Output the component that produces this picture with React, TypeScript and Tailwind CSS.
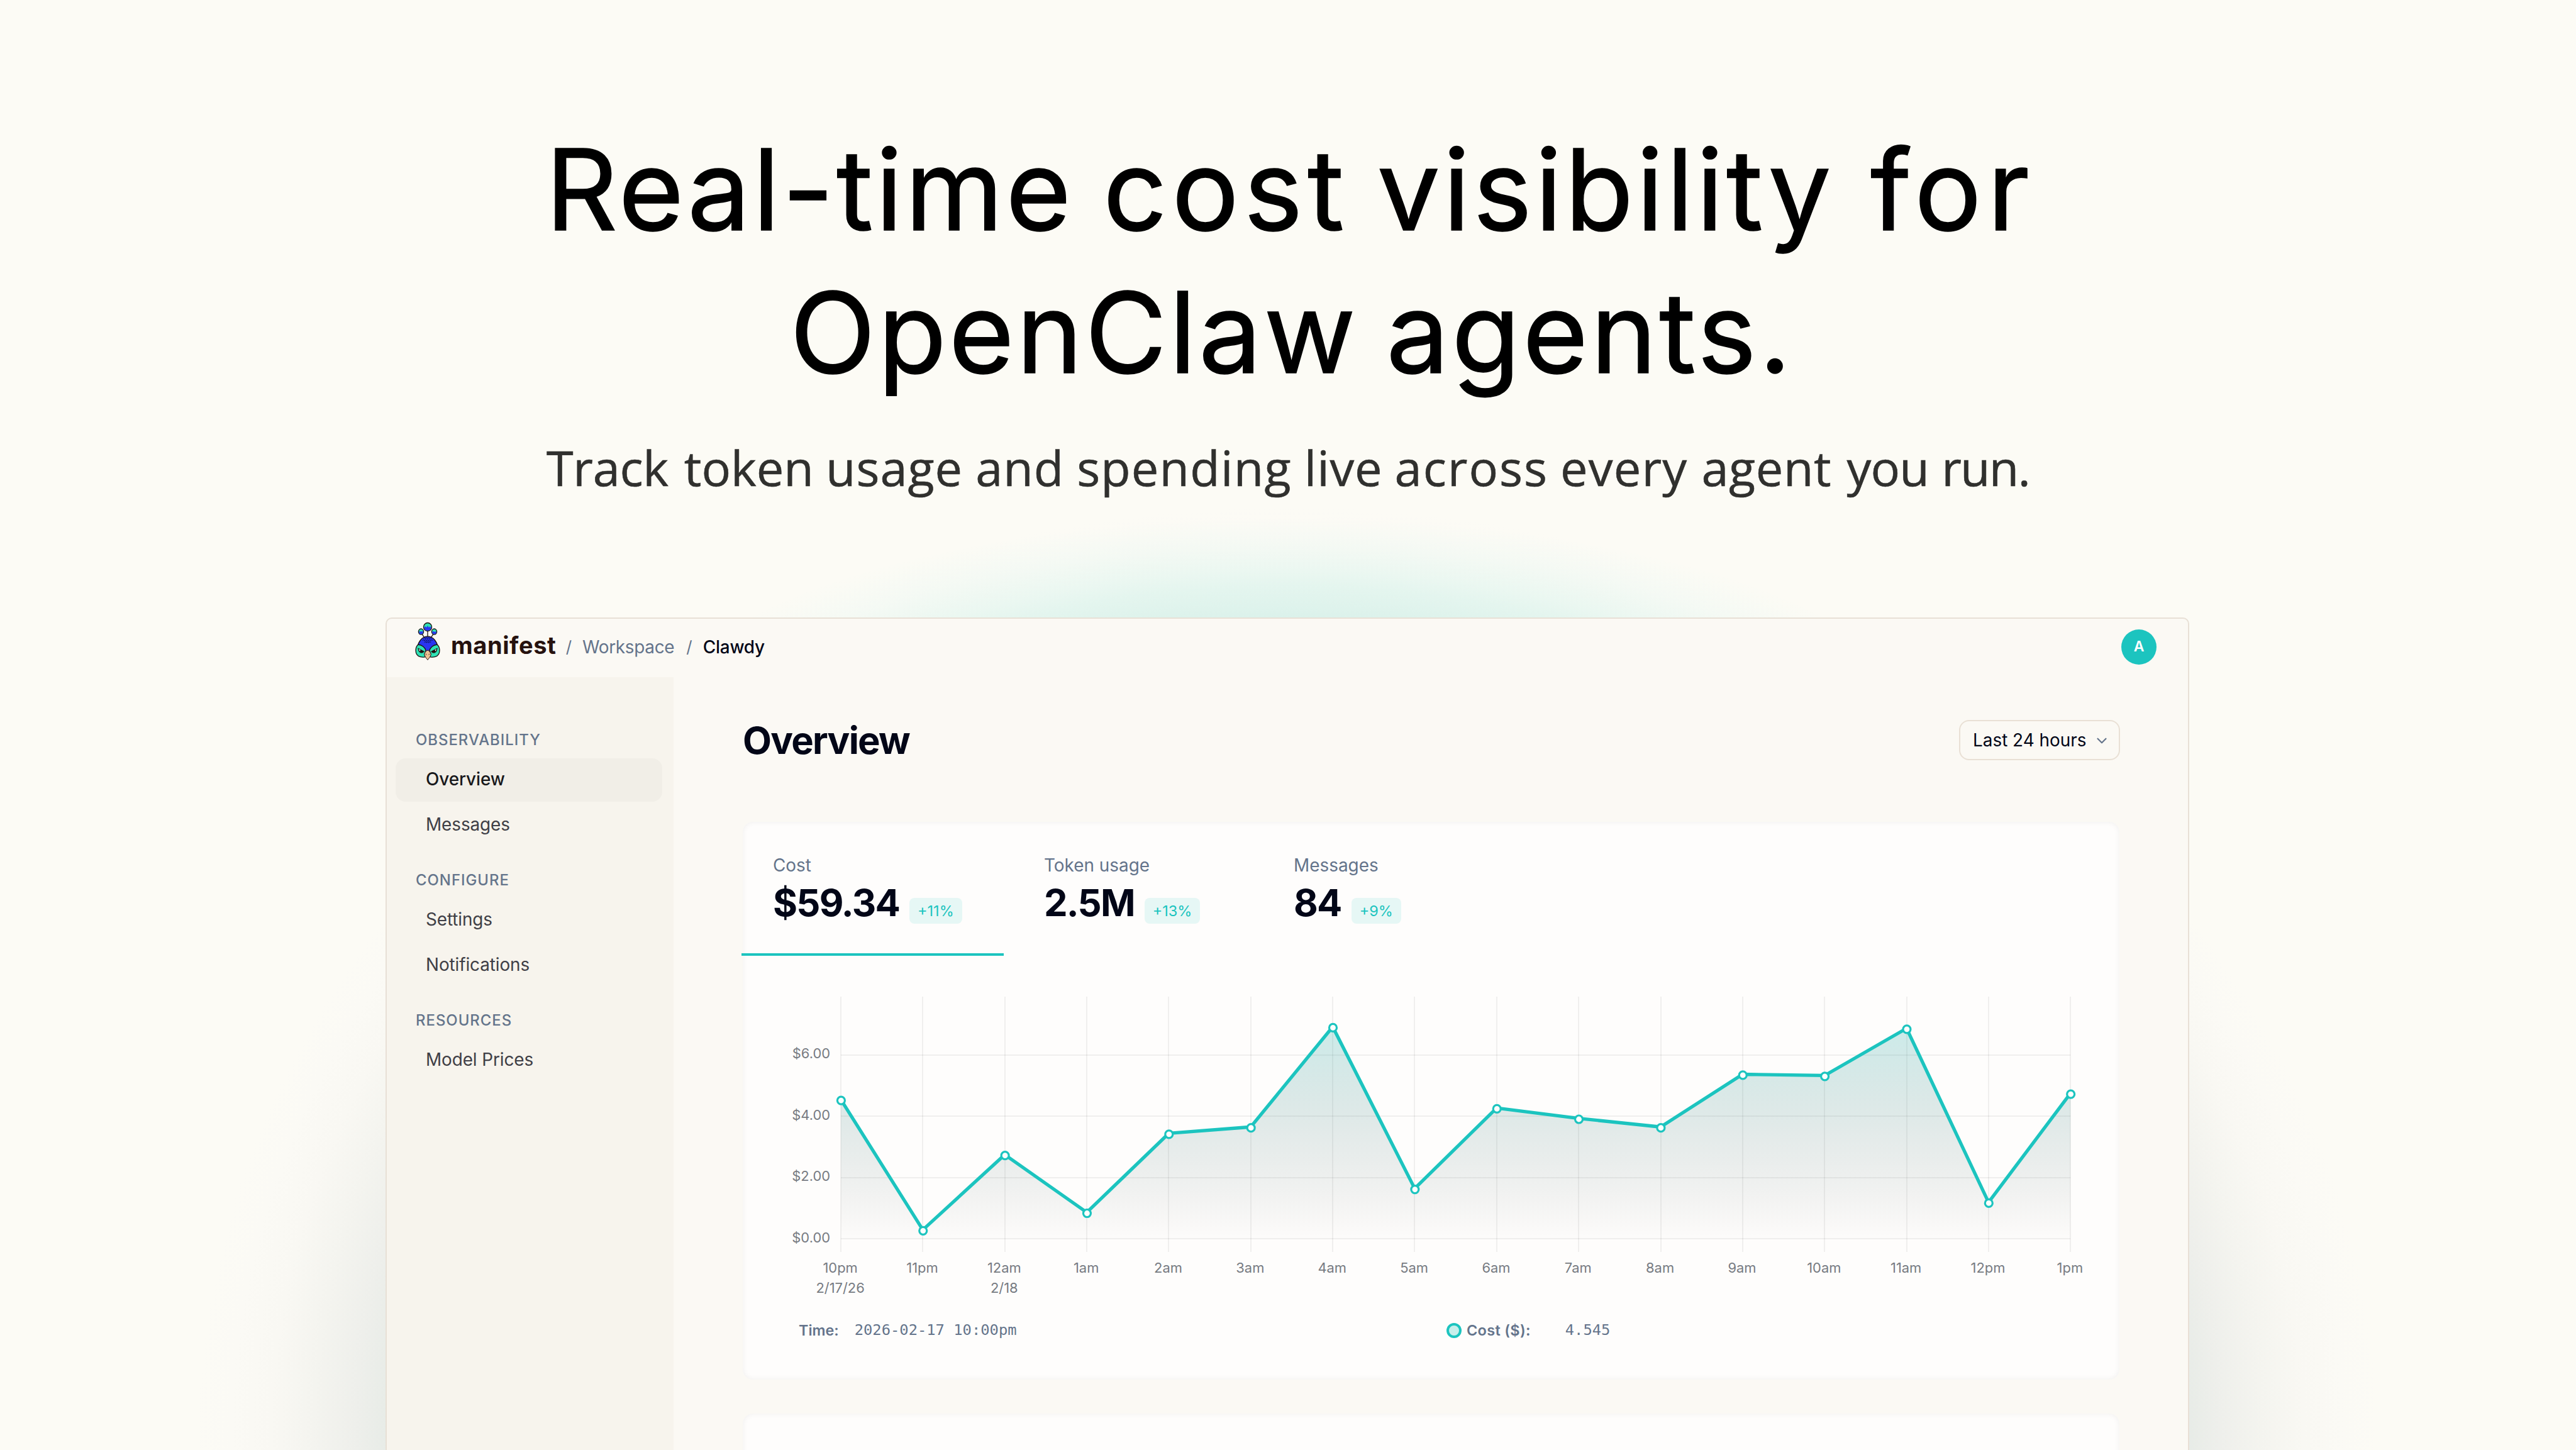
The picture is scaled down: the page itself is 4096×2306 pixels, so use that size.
import { ChevronDown } from 'lucide-react';
import { clsx } from 'clsx';

type Word = { text: string; className: string };

const headline: Word[][] = [
  [
    { text: 'Real-time', className: 'tracking-[4px]' },
    { text: 'cost', className: 'pl-[3px] tracking-[7.5px]' },
    { text: 'visibility', className: 'pl-[1px] tracking-[4.6px]' },
    { text: 'for', className: 'pl-[14px] tracking-[9.3px]' }
  ],
  [
    { text: 'OpenClaw', className: 'tracking-[3.8px]' },
    { text: 'agents.', className: 'pl-[1px] tracking-[4px]' }
  ]
];

const tagline: Word[] = [
  { text: 'Track', className: 'tracking-[-0.3px]' },
  { text: 'token', className: 'pl-[5px] tracking-normal' },
  { text: 'usage', className: '-ml-[1px] tracking-[1px]' },
  { text: 'and', className: 'tracking-[0.9px]' },
  { text: 'spending', className: 'tracking-[1.2px]' },
  { text: 'live', className: 'tracking-[0.8px]' },
  { text: 'across', className: '-ml-[1px] tracking-[2px]' },
  { text: 'every', className: '-ml-[1px] tracking-[1.2px]' },
  { text: 'agent', className: 'pl-[2px] tracking-[0.6px]' },
  { text: 'you', className: 'pl-[4px] tracking-[-0.8px]' },
  { text: 'run.', className: 'tracking-[-1.8px]' }
];

const navSections = [
  { title: 'Observability', items: ['Overview', 'Messages'] },
  { title: 'Configure', items: ['Settings', 'Notifications'] },
  { title: 'Resources', items: ['Model Prices'] }
];

const stats = [
  { label: 'Cost', value: '$59.34', trend: '+11%', className: '-ml-[3px] w-[417px] pl-[50px]' },
  { label: 'Token usage', value: '2.5M', trend: '+13%', className: 'w-[397px] pl-[64px]' },
  { label: 'Messages', value: '84', trend: '+9%', className: 'pl-[64px]' }
];

const series = [
  { hour: '10pm', date: '2/17/26', cost: 4.545 },
  { hour: '11pm', cost: 0.29 },
  { hour: '12am', date: '2/18', cost: 2.745 },
  { hour: '1am', cost: 0.86 },
  { hour: '2am', cost: 3.44 },
  { hour: '3am', cost: 3.65 },
  { hour: '4am', cost: 6.92 },
  { hour: '5am', cost: 1.64 },
  { hour: '6am', cost: 4.27 },
  { hour: '7am', cost: 3.93 },
  { hour: '8am', cost: 3.65 },
  { hour: '9am', cost: 5.37 },
  { hour: '10am', cost: 5.33 },
  { hour: '11am', cost: 6.87 },
  { hour: '12pm', cost: 1.19 },
  { hour: '1pm', cost: 4.75 }
];

function Words({ words }: { words: Word[] }) {
  return (
    <>
      {words.map((word, i) => (
        <span key={word.text}>
          {i > 0 && ' '}
          <span className={word.className}>{word.text}</span>
        </span>
      ))}
    </>
  );
}

function PeacockLogo() {
  return (
    <svg viewBox="22 22 122 186" className="h-[62px] w-[40px]" stroke="#1d1210" strokeWidth="4">
      <path d="M83 62V96M56 80L68 98M110 80L98 98" fill="none" />
      {/* crest */}
      <circle cx="83" cy="45" r="20" fill="#2ee2b4" />
      <path d="M66 47l5-5 6 6 6-9 6 9 6-6 5 5c0 10-8 16-17 16s-17-6-17-16z" fill="#2a35f0" stroke="none" />
      <ellipse cx="51" cy="68" rx="12.5" ry="14" fill="#2ee2b4" />
      <path d="M41 70l5-5 5 4 5-5 5 5c0 8-4 11-10 11s-10-4-10-10z" fill="#2a35f0" stroke="none" />
      <ellipse cx="115" cy="68" rx="12.5" ry="14" fill="#2ee2b4" />
      <path d="M105 70l5-5 5 5 5-4 5 4c0 7-4 10-10 10s-10-3-10-10z" fill="#2a35f0" stroke="none" />
      {/* head */}
      <path d="M83 91C55 91 38 118 34 140L60 185H106L132 140C128 118 111 91 83 91Z" fill="#2a35f0" />
      <path
        d="M58 112q5-9 10 0q5-9 10 0q5-9 10 0q5-9 10 0q5-9 10 0M63 101q5-8 10 0q5-8 10 0q5-8 10 0q5-8 10 0M68 121q5-8 10 0q5-8 10 0q5-8 10 0"
        fill="none"
        stroke="#141a70"
        strokeWidth="3.5"
      />
      {/* cheeks */}
      <path d="M37 131C24 140 22 164 30 178C38 191 58 194 71 190L68 176L74 158C70 146 54 130 37 131Z" fill="#2ee2b4" />
      <path d="M129 131C142 140 144 164 136 178C128 191 108 194 95 190L98 176L92 158C96 146 112 130 129 131Z" fill="#2ee2b4" />
      <path d="M36 148L66 164C60 174 44 172 40 162Z" fill="#1d1210" strokeWidth="2" />
      <path d="M130 148L100 164C106 174 122 172 126 162Z" fill="#1d1210" strokeWidth="2" />
      <path d="M40 152L48 156L45 164Z" fill="#ffffff" stroke="none" />
      <path d="M126 152L118 156L121 164Z" fill="#ffffff" stroke="none" />
      {/* beak */}
      <path d="M83 158C90 160 97 168 99 178C97 190 88 198 83 205C78 198 69 190 67 178C69 168 76 160 83 158Z" fill="#ecc193" strokeWidth="3" />
      <path d="M75 175l2 6M91 175l-2 6" strokeWidth="2.5" />
    </svg>
  );
}

function Header() {
  return (
    <header className="flex h-[93px] items-center pr-[50px] pb-[4px] pl-[45px]">
      <div className="-mt-[18px]">
        <PeacockLogo />
      </div>
      <span className="-mt-[5px] ml-[17px] text-[38px] leading-none font-bold tracking-[0.6px] text-[#26120f]">manifest</span>
      <nav className="ml-[15px] flex items-center gap-[17px] text-[27.9px] leading-[40px] text-[#64748b]">
        <span className="text-[26px]">/</span>
        <span className="tracking-[-0.3px]">Workspace</span>
        <span className="ml-[2px] text-[26px]">/</span>
        <span className="font-medium tracking-[-0.2px] text-[#020617]">Clawdy</span>
      </nav>
      <div className="ml-auto grid size-[56px] place-items-center rounded-full bg-[#1cc4bf] text-[23px] font-semibold text-white">A</div>
    </header>
  );
}

function Sidebar() {
  return (
    <aside className="flex w-[456px] shrink-0 flex-col gap-[35px] bg-[#f7f4ed] pt-[81.5px] pr-[18px] pl-[14px]">
      {navSections.map((section) => (
        <div key={section.title}>
          <h2 className="mb-[11px] pl-[32px] text-[23.9px] leading-[36px] font-medium tracking-[1px] text-[#64748b] uppercase">
            {section.title}
          </h2>
          <ul className="flex flex-col gap-[3px]">
            {section.items.map((item) => (
              <li
                key={item}
                className={clsx(
                  'flex h-[69px] items-center rounded-[16px] pl-[48px] text-[27.9px] tracking-[-0.1px]',
                  item === 'Overview' ? 'bg-[#f1eee7] font-medium text-[#18181b]' : 'text-[#3f3f46]'
                )}
              >
                {item}
              </li>
            ))}
          </ul>
        </div>
      ))}
    </aside>
  );
}

function CostChart() {
  const left = 155;
  const step = 130.35;
  const zero = 450;
  const perDollar = 48.7;
  const x = (i: number) => left + i * step;
  const y = (cost: number) => zero - cost * perDollar;
  const line = series.map((p, i) => `${x(i)},${y(p.cost)}`).join(' ');

  return (
    <svg viewBox="0 0 2188 560" className="block h-[560px] w-[2188px] text-[21.9px]" fill="#777b82">
      <defs>
        <linearGradient id="cost-fill" gradientUnits="userSpaceOnUse" x1="0" y1="63" x2="0" y2="460">
          <stop offset="0" stopColor="#1cc4bf" stopOpacity="0.25" />
          <stop offset="1" stopColor="#000000" stopOpacity="0" />
        </linearGradient>
      </defs>
      {[0, 2, 4, 6].map((tick) => (
        <g key={tick}>
          <rect x={left} y={Math.round(y(tick)) - 1} width={step * 15} height="2" fill="#000000" fillOpacity="0.055" />
          <text x="138" y={y(tick) + 5.6} textAnchor="end">
            ${tick}.00
          </text>
        </g>
      ))}
      {series.map((p, i) => (
        <g key={p.hour}>
          <rect x={Math.round(x(i)) - 1} y="65" width="2" height="406" fill="#000000" fillOpacity="0.055" />
          <text x={x(i) - 0.9} y="504" textAnchor="middle">
            {p.hour}
          </text>
          {p.date && (
            <text x={x(i) - 0.9} y="536" textAnchor="middle">
              {p.date}
            </text>
          )}
        </g>
      ))}
      <polygon points={`${x(0)},${zero} ${line} ${x(15)},${zero}`} fill="url(#cost-fill)" />
      <polyline points={line} fill="none" stroke="#1cc4bf" strokeWidth="5.3" strokeLinejoin="round" />
      {series.map((p, i) => (
        <circle key={p.hour} cx={x(i) + 0.4} cy={y(p.cost) + 1.4} r="6" fill="#fefefd" stroke="#1cc4bf" strokeWidth="3.2" />
      ))}
    </svg>
  );
}

function OverviewCard() {
  return (
    <section className="mr-[1px] mt-[98px] h-[887px] rounded-[16px] bg-[#fefdfc] pl-[1px] shadow-[inset_0_0_10px_rgba(15,23,42,0.06)]">
      <div className="flex h-[213px]">
        {stats.map((stat, i) => (
          <div
            key={stat.label}
            className={clsx('shrink-0 border-b-4 pt-[49px]', i === 0 ? 'border-[#1cc4bf]' : 'border-transparent', stat.className)}
          >
            <div className="text-[27.9px] leading-[40px] text-[#64748b]">{stat.label}</div>
            <div className="mt-[9px] flex items-start gap-[16px]">
              <span className="text-[59.7px] leading-[60px] font-bold tracking-[-0.03em] text-[#020617]">{stat.value}</span>
              <span className="mt-[23px] rounded-[8px] bg-[#e6f7f5] px-[13px] text-[23.5px] leading-[41px] text-[#1cc4bf]">
                {stat.trend}
              </span>
            </div>
          </div>
        ))}
      </div>
      <CostChart />
      <div className="mt-[16px] flex h-[40px] items-center pl-[88px] text-[#64748b]">
        <div className="flex w-[1030px] items-center gap-[25px]">
          <span className="text-[23.3px] font-semibold">Time:</span>
          <span className="font-['DejaVu_Sans_Mono',monospace] text-[23.8px]">2026-02-17 10:00pm</span>
        </div>
        <span className="size-[24px] rounded-full border-4 border-[#1cc4bf] bg-[#c6efeb]" />
        <span className="ml-[8px] text-[23.5px] font-semibold tracking-[0.3px]">Cost ($):</span>
        <span className="ml-[55px] font-['DejaVu_Sans_Mono',monospace] text-[23.8px]">4.545</span>
      </div>
    </section>
  );
}

export default function App() {
  return (
    <div className="h-[2306px] w-[4096px] overflow-hidden bg-[#fcfbf5] bg-[radial-gradient(1000px_322px_at_2047px_1145px,rgba(30,235,210,0.11)_50%,rgba(30,235,210,0.085)_66%,rgba(30,235,210,0.03)_85%,rgba(30,235,210,0)_100%),radial-gradient(1732px_1483px_at_2047px_2290px,#e6ebe6_82%,#eeefeb_85.6%,#f4f4ef_89.4%,#f9f8f3_93.3%,#fbfaf5_97%,#fcfbf5_100%)] font-['Inter',sans-serif] text-[#020617]">
      <h1 className="pt-[188px] text-center text-[178px] leading-[227px] font-normal text-black [-webkit-text-stroke:1.5px_black] [word-spacing:-6px]">
        <span className="block pl-[8px]">
          <Words words={headline[0]} />
        </span>
        <span className="block pl-[12px]">
          <Words words={headline[1]} />
        </span>
      </h1>
      <p className="mt-[51px] text-center font-['Open_Sans',sans-serif] text-[77.5px] leading-[100px] text-[#30302e] [-webkit-text-stroke:0.6px_#30302e]">
        <Words words={tagline} />
      </p>

      <div className="mt-[189px] ml-[613px] h-[1400px] w-[2868px] overflow-hidden rounded-t-[10px] border-2 border-[#e8e0d6] bg-[#fbf9f4]">
        <Header />
        <div className="flex h-full">
          <Sidebar />
          <main className="flex-1 pt-[68px] pr-[108px] pl-[110px]">
            <div className="flex items-center justify-between">
              <h2 className="text-[59.7px] leading-[64px] font-bold tracking-[-0.029em]">Overview</h2>
              <button
                type="button"
                className="flex h-[64px] w-[256px] items-center justify-between rounded-[16px] border-2 border-[#e9e0d5] pt-[1px] pr-[14px] pl-[20px] text-[27.9px]"
              >
                Last 24 hours
                <ChevronDown className="size-[26px] text-[#64748b]" strokeWidth={2} />
              </button>
            </div>
            <OverviewCard />
            <section className="mr-[1px] mt-[54px] h-[300px] rounded-[16px] bg-[#fefdfc] shadow-[inset_0_0_10px_rgba(15,23,42,0.06)]" />
          </main>
        </div>
      </div>
    </div>
  );
}
